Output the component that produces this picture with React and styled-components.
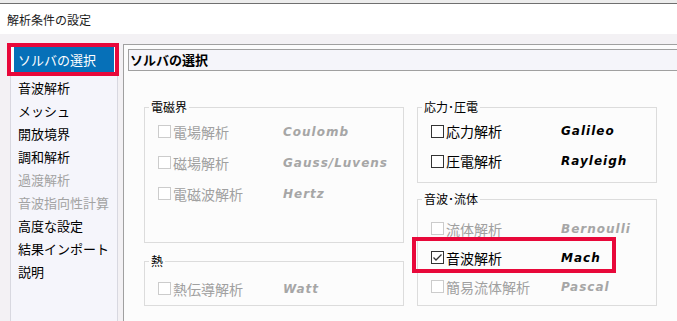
import React from "react";
import styled, { createGlobalStyle } from "styled-components";

const GlobalStyle = createGlobalStyle`
  html, body {
    margin: 0;
    padding: 0;
  }
  body {
    background: #f3f1f4;
    font-family: "Noto Sans CJK JP", "Liberation Sans", sans-serif;
    font-size: 13px;
    color: #000;
    overflow: hidden;
  }
`;

const Window = styled.div`
  width: 677px;
  height: 321px;
  display: flex;
  flex-direction: column;
  overflow: hidden;
`;

const TopEdge = styled.div`
  height: 3px;
  background: #ececec;
  border-bottom: 1px solid #6f6f6f;
`;

const TitleBar = styled.div`
  height: 30px;
  background: #fff;
  display: flex;
  align-items: center;
  padding-left: 7px;
  font-size: 12px;
  color: #1a1a1a;
`;

const Body = styled.div`
  flex: 1;
  display: flex;
  padding-top: 10px;
  min-height: 0;
`;

const Sidebar = styled.nav`
  width: 108px;
  margin-left: 10px;
  padding-top: 3px;
  box-sizing: border-box;
  background: #f5f5fb;
  border-left: 1px solid #d8d8e0;
  border-right: 1px solid #d8d8e0;
`;

const NavItem = styled.div`
  height: 23px;
  line-height: 23px;
  padding-left: 7px;
  white-space: nowrap;
  color: ${({ $disabled }) => ($disabled ? "#a3a3a3" : "#000")};
`;

const SelectedItem = styled.div`
  position: relative;
  height: 25px;
  line-height: 25px;
  margin: 0 3px 4px 3px;
  padding-left: 4px;
  background: #0670b8;
  color: #fff;
  box-shadow: -3px 0 0 #fff, 2px 0 0 #fff;

  &::after {
    content: "";
    position: absolute;
    left: -7px;
    top: -4px;
    width: 112px;
    height: 33px;
    box-sizing: border-box;
    border: 4px solid #e8083a;
  }
`;

const Content = styled.main`
  flex: 1;
  margin-left: 5px;
  padding: 4px 0 0 4px;
  background: #fcfcfc;
  border-top: 1px solid #a0a0a0;
  border-left: 1px solid #a0a0a0;
`;

const Header = styled.div`
  height: 22px;
  box-sizing: border-box;
  display: flex;
  align-items: center;
  padding-left: 1px;
  padding-bottom: 2px;
  background: #f5f5fa;
  border: 1px solid #a0a0a0;
  border-right: none;
  font-size: 13px;
  font-weight: 700;
`;

const Columns = styled.div`
  display: flex;
  gap: 13px;
  margin: 28px 0 0 16px;
`;

const Column = styled.div`
  width: ${({ $w }) => $w}px;
  display: flex;
  flex-direction: column;
  gap: ${({ $gap }) => $gap}px;
`;

const Group = styled.fieldset`
  margin: 0;
  padding: ${({ $padTop }) => $padTop}px 0 0 0;
  height: ${({ $h }) => $h}px;
  box-sizing: border-box;
  min-width: 0;
  border: 1px solid #dcdcdc;
`;

const Legend = styled.legend`
  margin-left: 4px;
  padding: 0 2px;
  font-size: 12px;
  line-height: 16px;
`;

const Row = styled.div`
  position: relative;
  display: grid;
  grid-template-columns: ${({ $labelW }) => $labelW}px auto;
  align-items: center;
  height: ${({ $h }) => $h}px;
  padding-left: 13px;

  ${({ $highlight }) =>
    $highlight &&
    `
    &::after {
      content: "";
      position: absolute;
      left: -6px;
      top: -6px;
      width: 204px;
      height: 36px;
      box-sizing: border-box;
      border: 4px solid #e8083a;
    }
  `}
`;

const CheckLabel = styled.span`
  display: flex;
  align-items: center;
  gap: 2px;
  font-size: 14px;
  white-space: nowrap;
  color: ${({ $disabled }) => ($disabled ? "#a0a0a0" : "#000")};
`;

const Box = styled.span`
  width: 13px;
  height: 13px;
  box-sizing: border-box;
  display: inline-flex;
  align-items: center;
  justify-content: center;
  background: #fff;
  border: 1px solid ${({ $disabled }) => ($disabled ? "#cccccc" : "#333")};
`;

const Solver = styled.span`
  font-family: "DejaVu Sans", "Liberation Sans", sans-serif;
  font-size: 12px;
  font-weight: 700;
  font-style: italic;
  letter-spacing: 1px;
  white-space: nowrap;
  color: ${({ $disabled }) => ($disabled ? "#a6a6a6" : "#000")};
`;

const CheckMark = () => (
  <svg width="11" height="11" viewBox="0 0 11 11">
    <path d="M1.5 5.5 L4 8 L9.5 2.5" fill="none" stroke="#333" strokeWidth="1.3" />
  </svg>
);

const Option = ({ label, solver, disabled, checked, labelW, h, highlight }) => (
  <Row $labelW={labelW} $h={h} $highlight={highlight}>
    <CheckLabel $disabled={disabled}>
      <Box $disabled={disabled}>{checked && <CheckMark />}</Box>
      {label}
    </CheckLabel>
    <Solver $disabled={disabled}>{solver}</Solver>
  </Row>
);

const navItems = [
  { label: "音波解析" },
  { label: "メッシュ" },
  { label: "開放境界" },
  { label: "調和解析" },
  { label: "過渡解析", disabled: true },
  { label: "音波指向性計算", disabled: true },
  { label: "高度な設定" },
  { label: "結果インポート" },
  { label: "説明" },
];

export default function App() {
  return (
    <>
      <GlobalStyle />
      <Window>
        <TopEdge />
        <TitleBar>解析条件の設定</TitleBar>
        <Body>
          <Sidebar>
            <SelectedItem>ソルバの選択</SelectedItem>
            {navItems.map((item) => (
              <NavItem key={item.label} $disabled={item.disabled}>
                {item.label}
              </NavItem>
            ))}
          </Sidebar>
          <Content>
            <Header>ソルバの選択</Header>
            <Columns>
              <Column $w={260} $gap={10}>
                <Group $h={144} $padTop={1}>
                  <Legend>電磁界</Legend>
                  <Option label="電場解析" solver="Coulomb" disabled labelW={125} h={31} />
                  <Option label="磁場解析" solver="Gauss/Luvens" disabled labelW={125} h={31} />
                  <Option label="電磁波解析" solver="Hertz" disabled labelW={125} h={31} />
                </Group>
                <Group $h={53} $padTop={4}>
                  <Legend>熱</Legend>
                  <Option label="熱伝導解析" solver="Watt" disabled labelW={125} h={31} />
                </Group>
              </Column>
              <Column $w={240} $gap={8}>
                <Group $h={84} $padTop={1}>
                  <Legend>応力･圧電</Legend>
                  <Option label="応力解析" solver="Galileo" labelW={130} h={30} />
                  <Option label="圧電解析" solver="Rayleigh" labelW={130} h={30} />
                </Group>
                <Group $h={115} $padTop={7}>
                  <Legend>音波･流体</Legend>
                  <Option label="流体解析" solver="Bernoulli" disabled labelW={130} h={29} />
                  <Option label="音波解析" solver="Mach" checked highlight labelW={130} h={29} />
                  <Option label="簡易流体解析" solver="Pascal" disabled labelW={130} h={29} />
                </Group>
              </Column>
            </Columns>
          </Content>
        </Body>
      </Window>
    </>
  );
}
